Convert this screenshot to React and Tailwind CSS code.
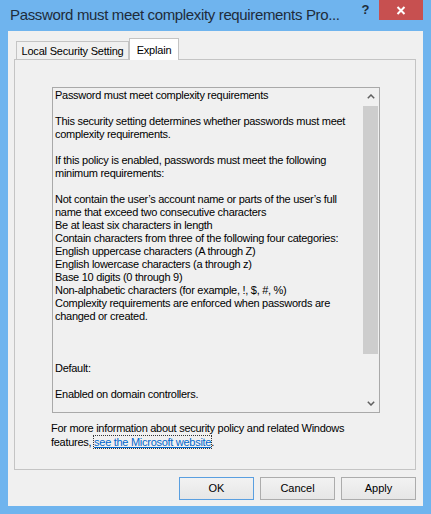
export default function App() {
  const lines = [
    "Password must meet complexity requirements",
    "",
    "This security setting determines whether passwords must meet",
    "complexity requirements.",
    "",
    "If this policy is enabled, passwords must meet the following",
    "minimum requirements:",
    "",
    "Not contain the user\u2019s account name or parts of the user\u2019s full",
    "name that exceed two consecutive characters",
    "Be at least six characters in length",
    "Contain characters from three of the following four categories:",
    "English uppercase characters (A through Z)",
    "English lowercase characters (a through z)",
    "Base 10 digits (0 through 9)",
    "Non-alphabetic characters (for example, !, $, #, %)",
    "Complexity requirements are enforced when passwords are",
    "changed or created.",
    "",
    "",
    "",
    "Default:",
    "",
    "Enabled on domain controllers.",
  ];
  return (
    <div className="w-[431px] h-[514px] bg-[#6fb4ee] flex flex-col font-['Liberation_Sans',Arial,sans-serif] text-black">
      {/* Title bar */}
      <div className="h-[31px] shrink-0 flex items-start">
        <div className="flex-1 min-w-0 pl-[10px] pt-[6px] text-[15px] leading-[18px] tracking-[-0.35px] text-[#1e2c3b] whitespace-nowrap">
          Password must meet complexity requirements Pro...
        </div>
        <div className="w-[27px] h-[20px] flex items-center justify-center text-[13px] font-bold text-[#1e2c3b]">
          ?
        </div>
        <div className="w-[44px] h-[20px] mr-[8px] bg-[#c75050] flex items-center justify-center">
          <svg width="10" height="9" viewBox="0 0 10 9">
            <path d="M1.5 1 L8.5 8 M8.5 1 L1.5 8" stroke="#ffffff" strokeWidth="2" />
          </svg>
        </div>
      </div>

      {/* Client area */}
      <div className="mx-[8px] mb-[8px] flex-1 bg-[#f0f0f0] flex flex-col pl-[6px] pr-[7px]">
        {/* Tabs */}
        <div className="h-[28px] shrink-0 flex items-end pl-[2px] relative z-10 text-[11px] tracking-[-0.2px]">
          <div className="h-[18px] w-[113px] border border-b-0 border-[#c4c4c4] bg-[#f0f0f0] flex items-center justify-center pt-[1px]">
            Local Security Setting
          </div>
          <div className="h-[22px] w-[50px] -mb-[1px] border border-b-0 border-[#c4c4c4] bg-white flex items-start justify-center pt-[3px]">
            Explain
          </div>
        </div>

        {/* Panel */}
        <div className="h-[411px] shrink-0 border border-[#c4c4c4] flex flex-col">
          <div className="ml-[37px] mt-[27px] w-[328px] h-[326px] border border-[#a9a9a9] bg-[#f0f0f0] flex">
            <div className="flex-1 pl-[2px] pt-[1px] text-[11px] leading-[13px] tracking-[-0.28px] whitespace-pre">
              {lines.map((l, i) => (
                <div key={i} className="h-[13px]">{l}</div>
              ))}
            </div>
            <div className="w-[17px] flex flex-col bg-[#f0f0f0]">
              <div className="h-[17px] flex items-center justify-center">
                <svg width="8" height="5" viewBox="0 0 8 5">
                  <path d="M0.8 4.2 L4 1 L7.2 4.2" stroke="#606060" strokeWidth="1.5" fill="none" />
                </svg>
              </div>
              <div className="mt-[1px] h-[248px] mx-[1px] bg-[#cdcdcd]"></div>
              <div className="flex-1"></div>
              <div className="h-[17px] flex items-center justify-center">
                <svg width="8" height="5" viewBox="0 0 8 5">
                  <path d="M0.8 0.8 L4 4 L7.2 0.8" stroke="#606060" strokeWidth="1.5" fill="none" />
                </svg>
              </div>
            </div>
          </div>
          <div className="ml-[36px] mt-[8px] text-[11px] leading-[14px] tracking-[-0.28px]">
            <div>For more information about security policy and related Windows</div>
            <div>
              features,{" "}
              <span className="text-[#0066cc] underline outline outline-1 outline-dotted outline-[#333333]">
                see the Microsoft website
              </span>
              .
            </div>
          </div>
        </div>

        {/* Buttons */}
        <div className="mt-[7px] flex justify-end gap-[6px] text-[11px]">
          <div className="w-[75px] h-[23px] border border-[#5a9fe0] bg-gradient-to-b from-[#f2f2f2] to-[#e6e6e6] flex items-center justify-center">
            OK
          </div>
          <div className="w-[75px] h-[23px] border border-[#acacac] bg-gradient-to-b from-[#f2f2f2] to-[#e6e6e6] flex items-center justify-center">
            Cancel
          </div>
          <div className="w-[75px] h-[23px] border border-[#acacac] bg-gradient-to-b from-[#f2f2f2] to-[#e6e6e6] flex items-center justify-center">
            Apply
          </div>
        </div>
      </div>
    </div>
  );
}
